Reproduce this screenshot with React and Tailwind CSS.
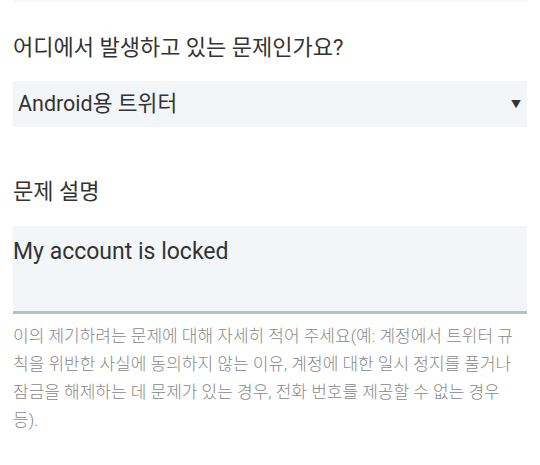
export default function App() {
  const font = { fontFamily: 'Roboto, "Noto Sans CJK KR", sans-serif' };
  return (
    <div className="w-[540px] h-[465px] bg-white overflow-hidden" style={font}>
      <div className="mx-[13px] w-[515px] h-[2px] bg-[#f5f8fa]" />
      <div className="px-[13px]">
        <div className="mt-[31px] text-[22px] leading-[30px] text-[#333] font-normal">어디에서 발생하고 있는 문제인가요?</div>
        <div className="mt-[18px] h-[46px] bg-[#f3f6f9] flex items-center justify-between pl-[5px] pr-[6px]">
          <span className="text-[21.5px] text-[#333]">Android용 트위터</span>
          <span className="text-[10px] text-[#333]">▼</span>
        </div>
        <div className="mt-[50px] text-[22px] leading-[30px] text-[#333] font-normal">문제 설명</div>
        <div className="mt-[19px] h-[88px] bg-[#f3f6f9] border-b-[3px] border-[#b4c0cb] pt-[9px]">
          <span className="text-[23px] text-[#333]">My account is locked</span>
        </div>
        <p className="mt-[8px] text-[17px] leading-[28px] text-[#888] font-light">
          이의 제기하려는 문제에 대해 자세히 적어 주세요(예: 계정에서 트위터 규칙을 위반한 사실에 동의하지 않는 이유, 계정에 대한 일시 정지를 풀거나 잠금을 해제하는 데 문제가 있는 경우, 전화 번호를 제공할 수 없는 경우 등).
        </p>
      </div>
    </div>
  );
}
